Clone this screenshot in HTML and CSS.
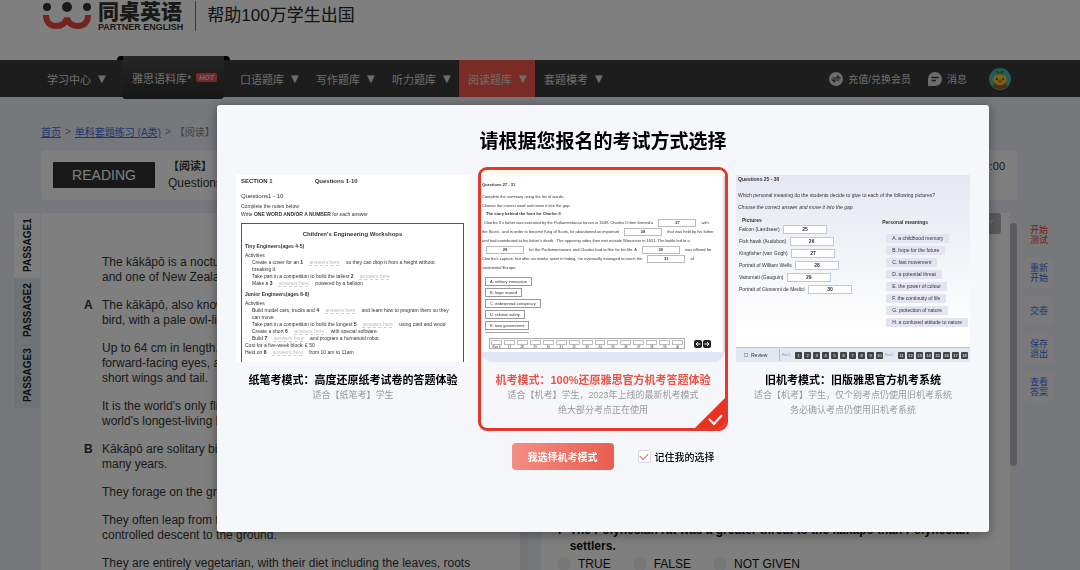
FILE: index.html
```html
<!DOCTYPE html>
<html lang="zh-CN">
<head>
    <meta charset="UTF-8">
    <meta name="viewport" content="width=device-width, initial-scale=1.0">
    <title>同桌英语</title>
    <link rel="stylesheet" href="styles.css">
</head>
<body>
    <div class="page">
        <header class="header">
            <svg class="logo-icon" viewBox="0 0 52 32" width="52" height="32">
                <g fill="#333">
                    <circle cx="6" cy="7" r="4"/>
                    <circle cx="26" cy="7" r="5"/>
                    <circle cx="46" cy="7" r="4"/>
                </g>
                <path d="M5 15C5 22 9 26 15 26C22 26 25 22 26 18C27 22 30 26 37 26C43 26 47 22 47 15" fill="none" stroke="#e8473f" stroke-width="6"/>
            </svg>
            <div class="logo-text">
                <strong>同桌英语</strong>
                <span>PARTNER ENGLISH</span>
            </div>
            <div class="slogan">帮助100万学生出国</div>
        </header>

        <nav class="nav">
            <a class="nav-item" href="#">学习中心<i>▼</i></a>
            <a class="nav-hot" href="#">雅思语料库*<b>HOT</b></a>
            <a class="nav-item" href="#">口语题库<i>▼</i></a>
            <a class="nav-item" href="#">写作题库<i>▼</i></a>
            <a class="nav-item" href="#">听力题库<i>▼</i></a>
            <a class="nav-item active" href="#">阅读题库<i>▼</i></a>
            <a class="nav-item" href="#">套题模考<i>▼</i></a>
            <div class="nav-right">
                <a class="nav-tool" href="#">
                    <svg viewBox="0 0 14 14" width="14" height="14">
                        <circle cx="7" cy="7" r="7" fill="#d8d8d8"/>
                        <path d="M3.5 6H10.5L8 3.8M10.5 8H3.5L6 10.2" fill="none" stroke="#333" stroke-width="1.2"/>
                    </svg>
                    充值/兑换会员
                </a>
                <a class="nav-tool" href="#">
                    <svg viewBox="0 0 14 14" width="14" height="14">
                        <path d="M0 14V7A7 7 0 1 1 7 14Z" fill="#d8d8d8"/>
                        <path d="M3.5 5.5H10.5M3.5 8.5H8" fill="none" stroke="#333" stroke-width="1.3"/>
                    </svg>
                    消息
                </a>
                <a class="avatar" href="#" aria-label="我的">
                    <svg viewBox="0 0 22 22" width="22" height="22">
                        <circle cx="11" cy="11" r="11" fill="#46b8b4"/>
                        <path d="M11 6Q9 1 6 3Q8 7 11 6ZM11 6Q12 1 15 3Q14 7 11 6Z" fill="#57803a"/>
                        <ellipse cx="11" cy="18" rx="7" ry="3" fill="#9a5a20"/>
                        <ellipse cx="11" cy="12" rx="7" ry="6" fill="#f2c230"/>
                        <path d="M5 15Q11 21 17 15" fill="none" stroke="#a85f1c" stroke-width="1.5"/>
                        <circle cx="8" cy="11" r="1" fill="#4a3010"/>
                        <circle cx="14" cy="11" r="1" fill="#4a3010"/>
                        <ellipse cx="11" cy="13.5" rx="2" ry="1.2" fill="#e5662c"/>
                    </svg>
                </a>
            </div>
        </nav>

        <main class="main">
            <div class="tabs">
                <button class="tab current" type="button">PASSAGE1</button>
                <button class="tab" type="button">PASSAGE2</button>
                <button class="tab" type="button">PASSAGE3</button>
            </div>

            <div class="content">
                <div class="crumb">
                    <a href="#">首页</a><span>&gt;</span><a href="#">单科套题练习 (A类)</a><span>&gt;</span>【阅读】
                </div>
                <div class="exam-bar">
                    <div class="exam-type">READING</div>
                    <div class="exam-name">
                        <strong>【阅读】</strong>
                        <span>Questions</span>
                    </div>
                    <div class="timer">60:00</div>
                </div>
                <div class="panels">
                    <article class="passage">
                        <p>The kākāpō is a nocturnal, flightless parrot that is critically endangered<br>and one of New Zealand's unique treasures.</p>
                        <p><b>A</b>The kākāpō, also known as the owl parrot, is a large, forest-dwelling<br>bird, with a pale owl-like face.</p>
                        <p>Up to 64 cm in length, they have predominantly yellow-green feathers,<br>forward-facing eyes, a large grey beak, large blue feet, and relatively<br>short wings and tail.</p>
                        <p>It is the world's only flightless parrot, and is also possibly one of the<br>world's longest-living birds.</p>
                        <p><b>B</b>Kākāpō are solitary birds and tend to occupy the same home range for<br>many years.</p>
                        <p>They forage on the ground and climb high into trees.</p>
                        <p>They often leap from trees and flap their wings, but at best manage a<br>controlled descent to the ground.</p>
                        <p>They are entirely vegetarian, with their diet including the leaves, roots</p>
                    </article>
                    <section class="questions">
                        <button class="expand" type="button" aria-label="展开">
                            <svg viewBox="0 0 12 12" width="12" height="12"><path d="M3 4L6 7L9 4" fill="none" stroke="#ddd" stroke-width="2"/></svg>
                        </button>
                        <div class="scroll-thumb"></div>
                        <div class="question">
                            <b>7</b>
                            <b>The Polynesian rat was a greater threat to the kākāpō than Polynesian settlers.</b>
                        </div>
                        <div class="answers">
                            <label><input type="radio" name="q7">TRUE</label>
                            <label><input type="radio" name="q7">FALSE</label>
                            <label><input type="radio" name="q7">NOT GIVEN</label>
                        </div>
                    </section>
                </div>
            </div>

            <div class="side">
                <button class="start" type="button">开始<br>测试</button>
                <button type="button">重新<br>开始</button>
                <button type="button">交卷</button>
                <button type="button">保存<br>退出</button>
                <button type="button">查看<br>答案</button>
            </div>
        </main>
    </div>

    <div class="mask">
        <form class="modal" role="dialog" aria-labelledby="modalTitle">
            <h1 id="modalTitle">请根据您报名的考试方式选择</h1>
            <div class="cards">
                <label class="card">
                    <input type="radio" name="mode">
                    <div class="thumb paper">
                        <div class="paper-head"><b>SECTION 1</b><b>Questions 1-10</b></div>
                        <p class="paper-range">Questions1 - 10</p>
                        <p>Complete the notes below</p>
                        <p>Write <b>ONE WORD AND/OR A NUMBER</b> for each answer</p>
                        <div class="paper-box">
                            <h3>Children's Engineering Workshops</h3>
                            <h4>Tiny Engineers(ages 4-5)</h4>
                            <p>Activities</p>
                            <ul>
                                <li>Create a cover for an <b>1</b> <u>answers here</u> so they can drop it from a height without<br>breaking it.</li>
                                <li>Take part in a competition to build the tallest <b>2</b> <u>answers here</u></li>
                                <li>Make a <b>3</b> <u>answers here</u> powered by a balloon</li>
                            </ul>
                            <h4 class="junior">Junior Engineers(ages 6-8)</h4>
                            <p>Activities</p>
                            <ul>
                                <li>Build model cars, trucks and <b>4</b> <u>answers here</u> and learn how to program them so they<br>can move</li>
                                <li>Take part in a competition to build the longest <b>5</b> <u>answers here</u> using card and wood</li>
                                <li>Create a short <b>6</b> <u>answers here</u> with special software.</li>
                                <li>Build <b>7</b> <u>answers here</u> and program a humanoid robot.</li>
                            </ul>
                            <div class="paper-end">Cost for a five-week block: £ 50<br>Held on <b>8</b> <u>answers here</u> from 10 am to 11am</div>
                        </div>
                    </div>
                    <div class="card-title">纸笔考模式：高度还原纸考试卷的答题体验</div>
                    <div class="card-desc">适合【纸笔考】学生</div>
                </label>

                <label class="card selected">
                    <input type="radio" name="mode" checked>
                    <div class="thumb computer">
                        <div class="summary">
                            <h3>Questions 27 - 31</h3>
                            <p>Complete the summary using the list of words.</p>
                            <p>Choose the correct word and move it into the gap.</p>
                            <h4>The story behind the hunt for Charles II</h4>
                            <p class="indent">Charles II's father was executed by the Parliamentarian forces in 1649. Charles II then formed a <em>27</em> with</p>
                            <p>the Scots, &nbsp;and in order to become King of Scots, he abandoned an important <em>28</em> that was held by his father</p>
                            <p>and had contributed to his father's death. &nbsp;The opposing sides then met outside Worcester in 1651. The battle led to a</p>
                            <p><em>29</em> for the Parliamentarians and Charles had to flee for his life. A <em>30</em> was offered for</p>
                            <p>Charles's capture, but after six weeks spent in hiding, &nbsp;he eventually managed to reach the <em>31</em> of</p>
                            <p>continental Europe.</p>
                            <div class="words">
                                <span>A. military innovation</span>
                                <span>B. large reward</span>
                                <span>C. widespread conspiracy</span>
                                <span>D. relative safety</span>
                                <span>E. new government</span>
                                <hr>
                            </div>
                            <div class="pager">
                                <div class="pager-list">
                                    <span>Part 3</span><span>27</span><span>28</span><span>29</span><span>30</span><span>31</span><span>32</span><span>33</span><span>34</span><span>35</span><span>36</span><span>37</span><span>38</span><span>39</span><span>40</span>
                                </div>
                                <svg viewBox="0 0 17 8" width="17" height="8">
                                    <rect width="8" height="8" rx="2" fill="#222"/>
                                    <rect x="9" width="8" height="8" rx="2" fill="#222"/>
                                    <path d="M6.5 4H2M4 2L2 4L4 6M10.5 4H15M13 2L15 4L13 6" fill="none" stroke="#fff"/>
                                </svg>
                            </div>
                        </div>
                    </div>
                    <div class="card-title">机考模式：100%还原雅思官方机考答题体验</div>
                    <div class="card-desc">适合【机考】学生，2023年上线的最新机考模式<br>绝大部分考点正在使用</div>
                    <svg class="corner" viewBox="0 0 32 32" width="32" height="32">
                        <path d="M32 0V32H0Z" fill="#e8321f"/>
                        <path d="M15 22L20 27L28 18" fill="none" stroke="#fff" stroke-width="2"/>
                    </svg>
                </label>

                <label class="card">
                    <input type="radio" name="mode">
                    <div class="thumb old">
                        <h3>Questions 25 - 30</h3>
                        <p class="old-ask">Which personal meaning do the students decide to give to each of the following pictures?</p>
                        <p class="old-rule">Choose the correct answer and move it into the gap.</p>
                        <div class="match">
                            <div class="pictures">
                                <h4>Pictures</h4>
                                <p>Falcon (Landseer) <em>25</em></p>
                                <p>Fish hawk (Audubon) <em>26</em></p>
                                <p>Kingfisher (van Gogh) <em>27</em></p>
                                <p>Portrait of William Wells <em>28</em></p>
                                <p>Vairumati (Gauguin) <em>29</em></p>
                                <p>Portrait of Giovanni de Medici <em>30</em></p>
                            </div>
                            <div class="meanings">
                                <h4>Personal meanings</h4>
                                <span>A. a childhood memory</span>
                                <span>B. hope for the future</span>
                                <span>C. fast movement</span>
                                <span>D. a potential threat</span>
                                <span>E. the power of colour</span>
                                <span>F. the continuity of life</span>
                                <span>G. protection of nature</span>
                                <span>H. a confused attitude to nature</span>
                            </div>
                        </div>
                        <div class="review">
                            <div class="review-tick"><i></i>Review</div>
                            <small>Part 1:</small>
                            <span>1</span><span>2</span><span>3</span><span>4</span><span>5</span><span>6</span><span>7</span><span>8</span><span>9</span><span>10</span>
                            <small>Part 2:</small>
                            <span>11</span><span>12</span><span>13</span><span>14</span><span>15</span><span>16</span><span>17</span><span>18</span>
                        </div>
                    </div>
                    <div class="card-title">旧机考模式：旧版雅思官方机考系统</div>
                    <div class="card-desc">适合【机考】学生，仅个别考点仍使用旧机考系统<br>务必确认考点仍使用旧机考系统</div>
                </label>
            </div>
            <div class="actions">
                <button class="confirm" type="button">我选择机考模式</button>
                <label class="remember"><input type="checkbox" checked>记住我的选择</label>
            </div>
        </form>
    </div>
</body>
</html>
```

FILE: styles.css
```css
* {
    box-sizing: border-box;
}
body {
    margin: 0;
    font-family: "Liberation Sans", "Noto Sans CJK SC", sans-serif;
    font-size: 12px;
    color: #333;
    background: #eef0f7;
}
h1, h3, h4, p, ul {
    margin: 0;
    padding: 0;
}
button {
    border: none;
    font-family: inherit;
    cursor: pointer;
}
.page {
    display: flex;
    flex-direction: column;
    height: 100vh;
    overflow: hidden;
}

/* header */
.header {
    display: flex;
    align-items: flex-start;
    height: 60px;
    flex-shrink: 0;
    padding-left: 41px;
    background: #fff;
}
.logo-text {
    display: flex;
    flex-direction: column;
    margin-left: 5px;
    padding: 2px 12px 0 0;
    white-space: nowrap;
}
.logo-text strong {
    font-size: 21px;
    line-height: 20px;
    font-weight: 900;
}
.logo-text span {
    font-size: 9px;
    line-height: 10px;
    font-weight: bold;
}
.slogan {
    margin-top: 1px;
    padding-left: 11px;
    border-left: 1px solid #777;
    font-size: 17px;
    line-height: 30px;
    color: #222;
}

/* nav */
.nav {
    display: flex;
    height: 37px;
    flex-shrink: 0;
    padding: 0 69px 0 38px;
    background: #3a3a3a;
    font-size: 11px;
}
.nav a {
    display: flex;
    align-items: center;
    color: #dcdcdc;
    text-decoration: none;
    white-space: nowrap;
}
.nav-item {
    gap: 7px;
    padding: 0 9px;
    width: 76px;
}
.nav-item i {
    font-family: "DejaVu Sans", sans-serif;
    font-style: normal;
    font-size: 10px;
}
.nav-item.active {
    background: #f2584c;
}
.nav-hot {
    position: relative;
    gap: 5px;
    margin: -4px 7px -2px 8px;
    padding: 0 8px 0 10px;
    width: 102px;
    background: linear-gradient(#4c4c4c, #2c2c2c);
    border-radius: 0 0 4px 4px;
}
/* folded corners either side of the raised tab */
.nav-hot::before {
    content: "";
    position: absolute;
    top: 0;
    left: -5px;
    right: -6px;
    height: 4px;
    border: solid #000;
    border-width: 0 6px;
    border-radius: 4px 4px 0 0;
}
.nav-hot b {
    padding: 0 3px;
    border-radius: 2px;
    background: #e8535a;
    font-size: 7px;
    line-height: 9px;
    font-style: italic;
}
.nav-right {
    display: flex;
    align-items: center;
    margin-left: auto;
    font-size: 10px;
}
.nav-tool {
    gap: 5px;
    margin-right: 17px;
}
.avatar {
    margin-left: 5px;
}

/* main */
.main {
    display: grid;
    grid-template-columns: 27px 1fr 37px;
    flex: 1;
    min-height: 0;
    padding: 0 26px 0 14px;
}
.tabs {
    padding-top: 116px;
}
.tab {
    display: block;
    width: 26px;
    height: 65px;
    padding: 0;
    background: #e0e6ea;
    writing-mode: vertical-rl;
    transform: rotate(180deg);
    text-align: center;
    font-size: 10px;
    font-weight: bold;
    color: #222;
}
.tab.current {
    background: #fff;
}
.content {
    display: flex;
    flex-direction: column;
    min-width: 0;
    min-height: 0;
}
.crumb {
    display: flex;
    align-items: center;
    height: 37px;
    margin-top: 16px;
    font-size: 10px;
    color: #888;
    white-space: nowrap;
}
.crumb a {
    color: #3f6fe0;
}
.crumb span {
    margin: 0 4px;
}
.exam-bar {
    display: flex;
    height: 50px;
    flex-shrink: 0;
    margin-bottom: 13px;
    padding: 8px 12px;
    background: #fff;
    border-radius: 4px;
}
.exam-type {
    width: 102px;
    margin-top: 4px;
    height: 26px;
    background: #333;
    color: #fff;
    font-size: 14px;
    line-height: 26px;
    text-align: center;
}
.exam-name {
    display: flex;
    flex-direction: column;
    padding-left: 13px;
    line-height: 17px;
}
.exam-name strong {
    font-size: 11px;
}
.timer {
    margin-left: auto;
    font-size: 11px;
    line-height: 17px;
}
.panels {
    display: grid;
    grid-template-columns: 487fr 476fr;
    gap: 13px;
    flex: 1;
    min-height: 0;
}
.passage {
    overflow: hidden;
    padding: 42px 0 0 61px;
    border-right: 8px solid #e8e9ec;
    background: #fff;
    line-height: 15px;
    white-space: nowrap;
}
.passage p {
    margin-bottom: 13px;
}
.passage b {
    display: inline-block;
    width: 18px;
    margin-left: -18px;
}
.questions {
    position: relative;
    padding: 309px 40px 0 16px;
    border-right: 7px solid #f0f0f0;
    background: #fff;
    color: #111;
}
.question {
    display: flex;
    gap: 6px;
    line-height: 16px;
}
.answers {
    display: flex;
    gap: 22px;
    margin-top: 2px;
    line-height: 16px;
    white-space: nowrap;
}
.answers label {
    display: flex;
    align-items: center;
    gap: 7px;
}
.answers input {
    appearance: none;
    width: 14px;
    height: 14px;
    margin: 0;
    border-radius: 50%;
    background: #f0f0f0;
}
.expand {
    position: absolute;
    top: 0;
    right: 9px;
    width: 22px;
    height: 21px;
    padding: 0;
    border-radius: 3px;
    background: #b4b5b8;
}
.scroll-thumb {
    position: absolute;
    top: 10px;
    right: -7px;
    width: 7px;
    height: 243px;
    border-radius: 4px;
    background: #b8b9bc;
}
.side {
    display: flex;
    flex-direction: column;
    gap: 8px;
    padding: 123px 0 0 7px;
}
.side button {
    width: 30px;
    height: 30px;
    padding: 0;
    border-radius: 3px;
    background: #f4f5f9;
    color: #3f6fe0;
    font-size: 9px;
    line-height: 10px;
}
.side .start {
    background: #f2f0f3;
    color: #f03c34;
}

/* modal */
.mask {
    position: fixed;
    inset: 0;
    z-index: 10;
    display: flex;
    justify-content: center;
    align-items: flex-start;
    padding: 105px 0 0 126px;
    background: rgba(0, 0, 0, 0.5);
}
.modal {
    width: 81%;
    max-width: 772px;
    padding: 25px 11px 62px;
    border-radius: 3px;
    background: #f5f7fb;
    box-shadow: 0 2px 12px rgba(0, 0, 0, 0.4);
    color: #000;
}
.modal h1 {
    font-size: 19px;
    line-height: 24px;
    text-align: center;
}
.cards {
    display: grid;
    grid-template-columns: repeat(3, 1fr);
    margin-top: 13px;
}
.card {
    position: relative;
    overflow: hidden;
    min-width: 0;
    padding: 5px 5px 10px;
    border: 3px solid transparent;
    border-radius: 9px;
    text-align: center;
    cursor: pointer;
}
.card > input {
    position: absolute;
    opacity: 0;
}
.card.selected {
    padding: 0 0 10px;
    border-color: #e5382c;
}
.card-title {
    margin-top: 10px;
    font-size: 11px;
    line-height: 16px;
    font-weight: bold;
    white-space: nowrap;
}
.selected .card-title {
    color: #ee5145;
}
.card-desc {
    font-size: 9px;
    line-height: 15px;
    color: #999;
    white-space: nowrap;
}
.corner {
    position: absolute;
    right: -1px;
    bottom: -1px;
}
.thumb {
    overflow: hidden;
    height: 187px;
    text-align: left;
    white-space: nowrap;
    color: #333;
}

/* paper preview */
.paper {
    padding: 3px 6px 0 5px;
    background: #fff;
    font-size: 5px;
    line-height: 8px;
}
.paper-head {
    display: flex;
    gap: 42px;
    line-height: 7px;
}
.paper-head b {
    font-size: 6px;
}
.paper .paper-range {
    margin: 7px 0 2px;
    font-size: 6px;
}
.paper-box {
    height: 160px;
    margin-top: 5px;
    padding: 6px 3px 0;
    border: 1px solid #555;
}
.paper-box h3 {
    margin-bottom: 4px;
    font-size: 6px;
    line-height: 8px;
    text-align: center;
}
.paper-box h4 {
    font-size: 5px;
    line-height: 9px;
}
.paper-box .junior {
    margin-top: 3px;
}
.paper-box ul {
    list-style: none;
}
.paper-box li {
    padding-left: 7px;
    line-height: 7px;
}
.paper-box li::before {
    content: "·";
    display: inline-block;
    width: 7px;
    margin-left: -7px;
}
.paper-end {
    line-height: 7px;
}
.paper u {
    margin: 0 4px;
    padding: 0 1px;
    text-decoration: underline dashed #ccc;
    color: #bbb;
}

/* computer preview */
.computer {
    height: 192px;
    padding-bottom: 10px;
    border-top: 6px solid #f9fbef;
    border-radius: 0 0 12px 12px;
    background: #e1e5f4;
}
.summary {
    height: 176px;
    padding: 4px 1px 0;
    border-right: 2px solid #ddd;
    background: #fff;
    font-size: 4px;
    line-height: 9px;
}
.summary h3 {
    margin-bottom: 3px;
    font-size: 4px;
}
.summary h4 {
    margin-left: 4px;
    font-size: 4px;
    line-height: 8px;
}
.summary .indent {
    margin-left: 2px;
}
.thumb em {
    display: inline-block;
    width: 38px;
    height: 8px;
    margin: 0 2px;
    border: 1px solid #bbb;
    background: #fff;
    line-height: 6px;
    font-style: normal;
    font-weight: bold;
    text-align: center;
}
.summary em {
    margin: 0 4px;
}
.words {
    display: flex;
    flex-direction: column;
    align-items: flex-start;
    gap: 2px;
    margin: 5px 0 0 3px;
}
.words span {
    padding: 0 4px;
    border: 1px solid #999;
    line-height: 7px;
}
.words hr {
    width: 44px;
    height: 1px;
    margin: 0;
    border: none;
    background: #aaa;
}
.pager {
    display: flex;
    align-items: center;
    gap: 9px;
    margin: 5px 0 0 7px;
}
.pager-list {
    display: flex;
    gap: 2px;
    width: 196px;
    height: 11px;
    padding: 1px;
    border: 1px solid #aaa;
}
.pager-list span {
    flex: 1;
    line-height: 5px;
    font-size: 3px;
    text-align: center;
}
.pager-list span::before {
    content: "";
    display: block;
    height: 3px;
    border: 1px solid #bbb;
}

/* old computer preview */
.old {
    display: flex;
    flex-direction: column;
    background: linear-gradient(#e5e8f1, #fff 85%);
    font-size: 5px;
    line-height: 8px;
}
.old h3, .old h4 {
    font-size: 5px;
    line-height: 8px;
}
.old > h3, .old > p {
    padding-left: 2px;
}
.old-ask {
    margin-top: 8px;
}
.old-rule {
    margin-top: 4px;
    font-style: italic;
}
.match {
    display: flex;
    justify-content: space-between;
    flex: 1;
    padding: 5px 2px 0 3px;
}
.pictures h4 {
    margin-bottom: 1px;
    padding-left: 3px;
}
.pictures p {
    height: 9px;
    margin-bottom: 3px;
    line-height: 9px;
}
.pictures em {
    width: 44px;
    height: 9px;
    border-color: #b9cbe0;
    line-height: 7px;
    vertical-align: top;
}
.meanings {
    display: flex;
    flex-direction: column;
    align-items: flex-start;
    gap: 3px;
    padding-top: 2px;
}
.meanings h4 {
    margin: 0 0 5px -4px;
}
.meanings span {
    padding: 0 6px;
    border-radius: 1px;
    background: #e2e5f1;
    line-height: 9px;
}
.review {
    display: flex;
    align-items: center;
    gap: 2px;
    height: 15px;
    border-top: 1px solid #b9c2d4;
    background: #e0e8f3;
}
.review-tick {
    display: flex;
    align-items: center;
    gap: 3px;
    width: 44px;
    height: 12px;
    padding-left: 8px;
    border-right: 1px solid #bbb;
}
.review-tick i {
    width: 4px;
    height: 4px;
    border: 1px solid #aaa;
    background: #fff;
}
.review span {
    width: 7px;
    height: 7px;
    border-radius: 1px;
    background: #444;
    color: #fff;
    font-size: 4px;
    line-height: 7px;
    text-align: center;
}
.review small {
    width: 11px;
    font-size: 3px;
    color: #888;
}

/* actions */
.actions {
    display: flex;
    justify-content: center;
    align-items: center;
    gap: 24px;
    margin-top: 12px;
    padding-left: 22px;
}
.confirm {
    width: 102px;
    height: 27px;
    padding: 0;
    border-radius: 4px;
    background: linear-gradient(100deg, #f38f84, #ea5c4f);
    color: #fff;
    font-size: 10px;
    font-weight: bold;
}
.remember {
    display: flex;
    align-items: center;
    gap: 4px;
    margin-right: 2px;
    font-size: 10px;
    font-weight: 500;
}
.remember input {
    appearance: none;
    display: grid;
    place-items: center;
    width: 13px;
    height: 13px;
    margin: 0;
    border: 1px solid #d3d8e3;
    border-radius: 2px;
    background: #fff;
}
.remember input:checked::before {
    content: "";
    width: 7px;
    height: 4px;
    margin-bottom: 2px;
    border: solid #f0604d;
    border-width: 0 0 1px 1px;
    transform: rotate(-45deg);
}
```
